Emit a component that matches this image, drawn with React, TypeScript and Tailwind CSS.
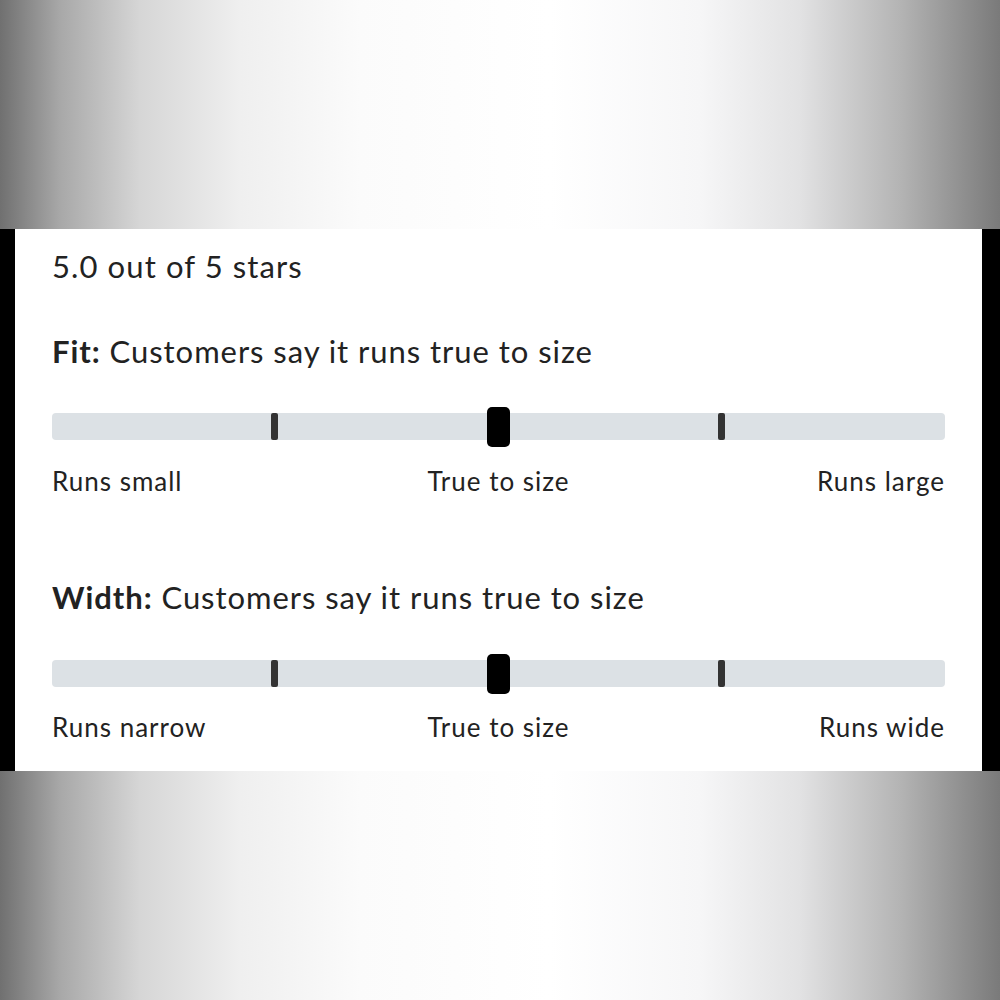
const sections = [
  { label: "Fit:", left: "Runs small", right: "Runs large" },
  { label: "Width:", left: "Runs narrow", right: "Runs wide" },
];

function Band() {
  return (
    <div className="h-[229px] w-full bg-[linear-gradient(90deg,#707070_0%,#a8a8a8_6%,#d6d6d6_14%,#efefef_24%,#fbfbfb_36%,#ffffff_55%,#f6f6f7_70%,#e2e2e3_80%,#b4b4b4_90%,#7a7a7a_100%)]" />
  );
}

function Track() {
  return (
    <div className="relative h-[27px] w-full rounded-[4px] bg-[#dce1e5]">
      <span className="absolute left-[219px] top-0 h-[27px] w-[7px] rounded-[2px] bg-[#333]" />
      <span className="absolute left-[435px] top-[-6px] h-[40px] w-[23px] rounded-[5px] bg-black" />
      <span className="absolute left-[666px] top-0 h-[27px] w-[7px] rounded-[2px] bg-[#333]" />
    </div>
  );
}

export default function App() {
  return (
    <div className="flex h-[1000px] w-[1000px] flex-col bg-white font-['Lato',sans-serif] text-[#222]">
      <Band />
      <div className="h-[542px] border-l-[15px] border-r-[18px] border-black bg-white px-[37px] pt-[19px]">
        <p className="text-[31px] leading-[36px] tracking-[1.1px]">5.0 out of 5 stars</p>
        {sections.map((s, i) => (
          <div key={s.label} className={i === 0 ? "mt-[49px]" : "mt-[82px]"}>
            <p className="text-[31px] leading-[36px] tracking-[0.95px]">
              <span className="font-bold">{s.label}</span> Customers say it runs true to size
            </p>
            <div className={i === 0 ? "mt-[44px]" : "mt-[45px]"}>
              <Track />
            </div>
            <div
              className={`grid grid-cols-3 text-[26px] leading-[32px] tracking-[1px] ${
                i === 0 ? "mt-[25px]" : "mt-[24px]"
              }`}
            >
              <span>{s.left}</span>
              <span className="text-center">True to size</span>
              <span className="text-right">{s.right}</span>
            </div>
          </div>
        ))}
      </div>
      <Band />
    </div>
  );
}
